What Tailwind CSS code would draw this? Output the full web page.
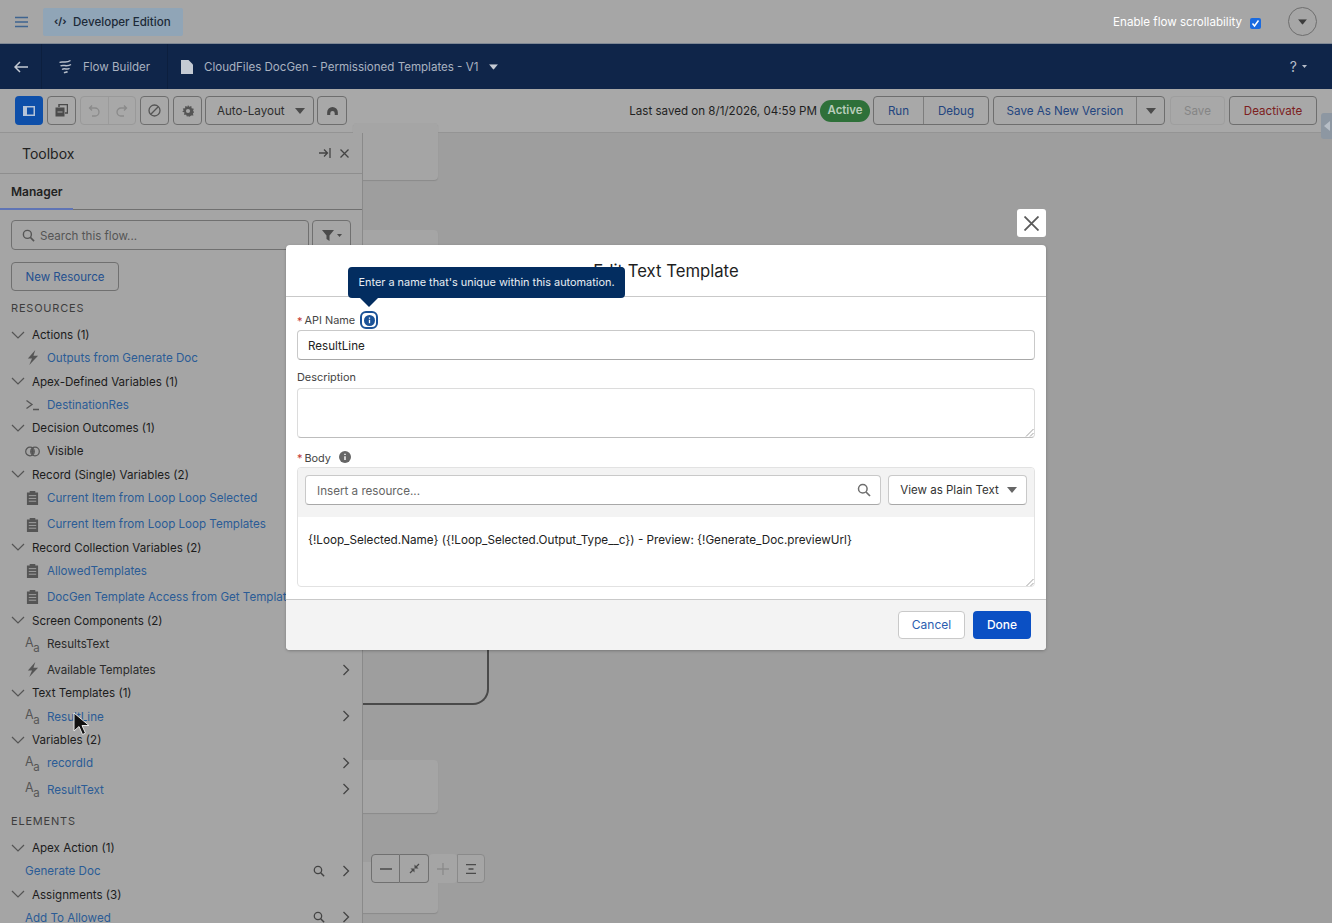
<!DOCTYPE html>
<html lang="en">
<head>
<meta charset="UTF-8">
<title>Flow Builder</title>
<script src="https://cdn.jsdelivr.net/npm/@tailwindcss/browser@4"></script>
</head>
<body class="font-[Inter,sans-serif] text-[#1c1c1c] bg-[#9e9e9e]">
<!-- shared icons -->
<svg class="hidden">
  <symbol id="chev-down" viewBox="0 0 14 14"><path d="M1 4l6 6 6-6" fill="none" stroke="currentColor" stroke-width="1.200"/></symbol>
  <symbol id="chev-right" viewBox="0 0 14 14"><path d="M4.500 2l5 5-5 5" fill="none" stroke="currentColor" stroke-width="1.300"/></symbol>
  <symbol id="search" viewBox="0 0 14 14"><circle cx="5.800" cy="5.800" r="4.300" fill="none" stroke="currentColor" stroke-width="1.500"/><path d="M9 9l4 4" stroke="currentColor" stroke-width="1.700"/></symbol>
  <symbol id="text-a" viewBox="0 0 15 16"><text x="0" y="10.500" font-size="12.500" font-family="Inter" fill="currentColor">A</text><text x="8.300" y="15.500" font-size="11.500" font-family="Inter" fill="currentColor">a</text></symbol>
  <symbol id="record" viewBox="0 0 14 16"><path d="M1 2.500h3V1h6v1.500h3V16H1z" fill="currentColor"/><path d="M3 6h8M3 9h8M3 12h8" stroke="#a5a5a5" stroke-width="1"/></symbol>
  <symbol id="bolt" viewBox="0 0 14 16"><path d="M10 0L2 9h4.500L3.500 16 13 6H8z" fill="currentColor"/></symbol>
  <symbol id="caret" viewBox="0 0 10 6"><path d="M0 0h10L5 6z" fill="currentColor"/></symbol>
</svg>

<div class="relative h-[923px] w-[1332px] overflow-hidden">
  <!-- global header -->
  <header class="flex h-[44px] items-center border-b border-[#7f8894] bg-[#a6a6a6] pl-[15px] pr-[15px]">
    <svg class="w-[13px] h-[12px] text-[#3f6490]" viewBox="0 0 13 12"><path d="M0 1.500h13M0 6h13M0 10.500h13" stroke="currentColor" stroke-width="1.700"/></svg>
    <div class="ml-[15px] flex h-[28px] w-[140px] items-center rounded-[2px] bg-[#90a5b7] pl-[11px] text-[11.600px] font-medium text-[#1d2a38]">
      <span class="w-[14px] text-[10px] font-bold">‹/›</span><span class="ml-[5px] pt-[2px]">Developer Edition</span>
    </div>
    <span class="ml-auto pt-[2px] text-[11.600px] text-white">Enable flow scrollability</span>
    <span class="ml-[8px] mt-[3px] flex h-[11px] w-[11px] items-center justify-center rounded-[2px] bg-[#1a6be0]">
      <svg class="w-[9px] h-[9px]" viewBox="0 0 9 9"><path d="M1.500 4.500l2 2.500 4-5.500" fill="none" stroke="#fff" stroke-width="1.500"/></svg>
    </span>
    <span class="ml-[27px] flex h-[29px] w-[29px] items-center justify-center rounded-full border border-[#6e6e6e]">
      <svg class="w-[9px] h-[6px] text-[#3c3c3c]" viewBox="0 0 10 6"><use href="#caret"/></svg>
    </span>
  </header>

  <!-- flow builder bar -->
  <nav class="flex h-[45px] items-center bg-[#0f2549] text-[11.550px] text-[#a9b2c0]">
    <div class="flex h-full w-[42px] items-center justify-center border-r border-[#0c1f3e]">
      <svg class="w-[14px] h-[12px]" viewBox="0 0 14 12"><path d="M6 1L1 6l5 5M1 6h13" fill="none" stroke="#c4cad3" stroke-width="1.500"/></svg>
    </div>
    <div class="flex h-full w-[126px] items-center border-r border-[#0c1f3e] pl-[16px]">
      <svg class="w-[15px] h-[15px]" viewBox="0 0 15 15"><path d="M1.500 3.500c3-2 6 1.500 11-2M2.500 7c3-2 6 1.500 10.500-1.500M4 10.500c3-2 5 1 7.500-1.200M6 14c1.500-1 2.500-.3 3.500-1.500" fill="none" stroke="#b8bfca" stroke-width="1.500"/></svg>
      <span class="ml-[10px] pt-[2px]">Flow Builder</span>
    </div>
    <div class="flex items-center pl-[13px]">
      <svg class="w-[12px] h-[14px]" viewBox="0 0 12 14"><path d="M0 0h7.500L12 4.500V14H0z" fill="#c4cad3"/></svg>
      <span class="ml-[11px] pt-[2px]">CloudFiles DocGen - Permissioned Templates - V1</span>
      <svg class="ml-[11px] w-[9px] h-[6px] text-[#c4cad3]" viewBox="0 0 10 6"><use href="#caret"/></svg>
    </div>
    <span class="ml-auto text-[14px] text-[#b5bcc8]">?</span>
    <svg class="ml-[5px] mr-[25px] w-[5px] h-[3px] text-[#b5bcc8]" viewBox="0 0 10 6"><use href="#caret"/></svg>
  </nav>

  <!-- toolbar -->
  <div class="flex h-[44px] items-center border-b border-[#949494] bg-[#a8a8a8] pl-[15px] pr-[15px] text-[11.600px]">
    <span class="flex h-[29px] w-[28px] items-center justify-center rounded-[4px] bg-[#0e4fa9]">
      <svg class="w-[12px] h-[10px]" viewBox="0 0 12 10"><path d="M0 0h12v10H0z" fill="#b6c4d8"/><path d="M4 1.500h6.500v7H4z" fill="#0e4fa9"/></svg>
    </span>
    <span class="ml-[4px] flex h-[29px] w-[29px] items-center justify-center rounded-[4px] border border-[#6e6e6e]">
      <svg class="w-[13px] h-[13px]" viewBox="0 0 13 13"><path d="M4 3V.5h8.500V9H10" fill="none" stroke="#4b4b4b" stroke-width="1.500"/><path d="M.5 3.500h9v9h-9z" fill="#4b4b4b"/><path d="M2.500 8h5" stroke="#a8a8a8"/></svg>
    </span>
    <span class="ml-[4px] flex h-[29px] w-[56px] rounded-[4px] border border-[#999]">
      <span class="flex flex-1 items-center justify-center border-r border-[#9b9b9b]">
        <svg class="w-[12px] h-[12px]" viewBox="0 0 12 12"><path d="M4 .5L1.500 3 4 5.500M1.500 3H7a3.800 3.800 0 010 8H4" fill="none" stroke="#8a8a8a" stroke-width="1.300"/></svg>
      </span>
      <span class="flex flex-1 items-center justify-center">
        <svg class="w-[12px] h-[12px]" viewBox="0 0 12 12"><path d="M8 .5L10.500 3 8 5.500M10.500 3H5a3.800 3.800 0 000 8h3" fill="none" stroke="#8a8a8a" stroke-width="1.300"/></svg>
      </span>
    </span>
    <span class="ml-[4px] flex h-[29px] w-[29px] items-center justify-center rounded-[4px] border border-[#6e6e6e]">
      <svg class="w-[13px] h-[13px]" viewBox="0 0 13 13"><circle cx="6.500" cy="6.500" r="5.500" fill="none" stroke="#555" stroke-width="1.300"/><path d="M2.800 10.200l7.400-7.400" stroke="#555" stroke-width="1.300"/></svg>
    </span>
    <span class="ml-[4px] flex h-[29px] w-[29px] items-center justify-center rounded-[4px] border border-[#6e6e6e]">
      <svg class="w-[12px] h-[12px]" viewBox="0 0 13 13"><path d="M6.500 0l1.300 2 2.300-.8.300 2.400 2.400.4-.9 2.500 1.600 1-1.700 1.600.6 2.300-2.400.1L7.500 13l-1-1.500-1 1.500-1-2.400-2.400-.1.600-2.300L.200 7l1.600-1L.900 3.900l2.400-.3.300-2.400 2.300.8z" fill="#555"/><circle cx="6.500" cy="6.500" r="2.300" fill="#a8a8a8"/></svg>
    </span>
    <span class="ml-[3px] flex h-[29px] w-[109px] items-center rounded-[4px] border border-[#6e6e6e] pl-[11px] pr-[8px] text-[#2e2e2e]">
      <span class="pt-[2px]">Auto-Layout</span>
      <svg class="ml-auto w-[10px] h-[6px] text-[#4b4b4b]" viewBox="0 0 10 6"><use href="#caret"/></svg>
    </span>
    <span class="ml-[3px] flex h-[29px] w-[30px] items-center justify-center rounded-[4px] border border-[#6e6e6e]">
      <svg class="w-[11px] h-[8px]" viewBox="0 0 12 9"><path d="M0 9V6a6 6 0 0112 0v3H8.500V7a2.500 2.500 0 00-5 0v2z" fill="#4b4b4b"/></svg>
    </span>

    <span class="ml-auto pt-[2px] text-[#1f1f1f]">Last saved on 8/1/2026, 04:59 PM</span>
    <span class="ml-[3px] flex h-[22px] w-[50px] items-center justify-center rounded-full bg-[#2e7039] text-[11.400px] font-semibold text-[#b9cdbb]">Active</span>
    <span class="ml-[3px] flex h-[29px] w-[116px] rounded-[4px] border border-[#6e6e6e] text-[#23457f]">
      <span class="flex w-[50px] items-center justify-center border-r border-[#7d7d7d] pt-[2px]">Run</span>
      <span class="flex flex-1 items-center justify-center pt-[2px]">Debug</span>
    </span>
    <span class="ml-[4px] flex h-[29px] w-[172px] rounded-[4px] border border-[#6e6e6e] text-[#23457f]">
      <span class="flex w-[143px] items-center justify-center border-r border-[#7d7d7d] pt-[2px]">Save As New Version</span>
      <span class="flex flex-1 items-center justify-center"><svg class="w-[10px] h-[6px] text-[#4b4b4b]" viewBox="0 0 10 6"><use href="#caret"/></svg></span>
    </span>
    <span class="ml-[5px] flex h-[29px] w-[55px] items-center justify-center rounded-[4px] border border-[#9e9e9e] pt-[2px] text-[#858585]">Save</span>
    <span class="ml-[4px] flex h-[29px] w-[88px] items-center justify-center rounded-[4px] border border-[#6e6e6e] pt-[2px] text-[#7c2020]">Deactivate</span>
  </div>

  <!-- body: toolbox on the left, canvas behind -->
  <div class="flex h-[790px]">
    <aside class="relative z-10 w-[363px] shrink-0 overflow-hidden border-r border-[#8a8a8a] bg-[#a5a5a5]">
      <div class="flex h-[41px] items-center border-b border-[#8e8e8e] pl-[22px] pr-[13px]">
        <span class="text-[14px] text-[#222]">Toolbox</span>
        <svg class="ml-auto w-[12px] h-[10px]" viewBox="0 0 12 10"><path d="M0 5h8M5 1.500L8.500 5 5 8.500M11 0v10" fill="none" stroke="#444" stroke-width="1.300"/></svg>
        <svg class="ml-[9px] w-[9px] h-[9px]" viewBox="0 0 9 9"><path d="M.5.500l8 8M8.500.500l-8 8" stroke="#444" stroke-width="1.300"/></svg>
      </div>
      <div class="relative h-[36px] border-b border-[#707070] pl-[11px] pt-[10px] text-[12px] font-semibold leading-[16px] text-[#222]">
        Manager
        <span class="absolute bottom-[-1px] left-0 h-[2px] w-[73px] bg-[#5f74b5]"></span>
      </div>

      <div class="mt-[10px] flex pl-[11px]">
        <div class="flex h-[30px] w-[298px] items-center rounded-[4px] border border-[#707070] pl-[10px] text-[11.600px] text-[#555]">
          <svg class="w-[13px] h-[13px] text-[#555]"><use href="#search"/></svg>
          <span class="ml-[5px] pt-[3px]">Search this flow...</span>
        </div>
        <div class="ml-[3px] flex h-[30px] w-[39px] items-center justify-center rounded-[4px] border border-[#707070]">
          <svg class="w-[12px] h-[11px]" viewBox="0 0 12 11"><path d="M0 0h12L7.500 5.500V11L4.500 9V5.500z" fill="#4b4b4b"/></svg>
          <svg class="ml-[3px] w-[5px] h-[3px] text-[#4b4b4b]" viewBox="0 0 10 6"><use href="#caret"/></svg>
        </div>
      </div>
      <div class="ml-[11px] mt-[12px] flex h-[29px] w-[108px] items-center justify-center rounded-[4px] border border-[#707070] pt-[2px] text-[11.500px] text-[#24508f]">New Resource</div>

      <div class="ml-[11px] mt-[10px] h-[15px] text-[11px] leading-[15px] tracking-[0.8px] text-[#3d3d3d]">RESOURCES</div>

      <!-- resource tree -->
      <div class="mt-[7px] text-[11.600px] leading-[23.300px] [&_span]:pt-[2px]">
        <div class="flex h-[23.300px] items-center pl-[11px]"><svg class="w-[14px] h-[14px] text-[#555]"><use href="#chev-down"/></svg><span class="ml-[7px]">Actions (1)</span></div>
        <div class="flex h-[23.300px] items-center pl-[26px] text-[#2b5c96]"><svg class="w-[13px] h-[15px] text-[#555]"><use href="#bolt"/></svg><span class="ml-[8px]">Outputs from Generate Doc</span></div>
        <div class="flex h-[23.300px] items-center pl-[11px]"><svg class="w-[14px] h-[14px] text-[#555]"><use href="#chev-down"/></svg><span class="ml-[7px]">Apex-Defined Variables (1)</span></div>
        <div class="flex h-[23.300px] items-center pl-[26px] text-[#2b5c96]"><svg class="w-[13px] h-[12px]" viewBox="0 0 13 12"><path d="M.5 1.500L6 5.500.5 9.500M7 10.500h6" fill="none" stroke="#555" stroke-width="1.300"/></svg><span class="ml-[8px]">DestinationRes</span></div>
        <div class="flex h-[23.300px] items-center pl-[11px]"><svg class="w-[14px] h-[14px] text-[#555]"><use href="#chev-down"/></svg><span class="ml-[7px]">Decision Outcomes (1)</span></div>
        <div class="flex h-[23.300px] items-center pl-[25px]"><svg class="w-[15px] h-[11px]" viewBox="0 0 15 11"><path d="M7.500 2.300a4.300 4.300 0 010 6.400 4.300 4.300 0 010-6.400z" fill="#555"/><circle cx="5" cy="5.500" r="4.300" fill="none" stroke="#555" stroke-width="1.200"/><circle cx="10" cy="5.500" r="4.300" fill="none" stroke="#555" stroke-width="1.200"/></svg><span class="ml-[7px]">Visible</span></div>
        <div class="flex h-[23.300px] items-center pl-[11px]"><svg class="w-[14px] h-[14px] text-[#555]"><use href="#chev-down"/></svg><span class="ml-[7px]">Record (Single) Variables (2)</span></div>
        <div class="flex h-[23.300px] items-center pl-[26px] text-[#2b5c96]"><svg class="w-[13px] h-[15px] text-[#555]"><use href="#record"/></svg><span class="ml-[8px]">Current Item from Loop Loop Selected</span></div>
        <div class="mt-[3px] flex h-[23.300px] items-center pl-[26px] text-[#2b5c96]"><svg class="w-[13px] h-[15px] text-[#555]"><use href="#record"/></svg><span class="ml-[8px]">Current Item from Loop Loop Templates</span></div>
        <div class="flex h-[23.300px] items-center pl-[11px]"><svg class="w-[14px] h-[14px] text-[#555]"><use href="#chev-down"/></svg><span class="ml-[7px]">Record Collection Variables (2)</span></div>
        <div class="flex h-[23.300px] items-center pl-[26px] text-[#2b5c96]"><svg class="w-[13px] h-[15px] text-[#555]"><use href="#record"/></svg><span class="ml-[8px]">AllowedTemplates</span></div>
        <div class="mt-[3px] flex h-[23.300px] items-center pl-[26px] text-[#2b5c96]"><svg class="w-[13px] h-[15px] text-[#555]"><use href="#record"/></svg><span class="ml-[8px] whitespace-nowrap">DocGen Template Access from Get Templates</span></div>
        <div class="flex h-[23.300px] items-center pl-[11px]"><svg class="w-[14px] h-[14px] text-[#555]"><use href="#chev-down"/></svg><span class="ml-[7px]">Screen Components (2)</span></div>
        <div class="flex h-[23.300px] items-center pl-[25px] text-[#2a2a2a]"><svg class="w-[15px] h-[16px] text-[#555]"><use href="#text-a"/></svg><span class="ml-[7px]">ResultsText</span></div>
        <div class="mt-[3px] flex h-[23.300px] items-center pl-[26px] pr-[9px] text-[#2a2a2a]"><svg class="w-[13px] h-[15px] text-[#555]"><use href="#bolt"/></svg><span class="ml-[8px]">Available Templates</span><svg class="ml-auto w-[14px] h-[14px] text-[#444]"><use href="#chev-right"/></svg></div>
        <div class="flex h-[23.300px] items-center pl-[11px]"><svg class="w-[14px] h-[14px] text-[#555]"><use href="#chev-down"/></svg><span class="ml-[7px]">Text Templates (1)</span></div>
        <div class="flex h-[23.300px] items-center pl-[25px] pr-[9px] text-[#2b5c96]"><svg class="w-[15px] h-[16px] text-[#555]"><use href="#text-a"/></svg><span class="ml-[7px]">ResultLine</span><svg class="ml-auto w-[14px] h-[14px] text-[#444]"><use href="#chev-right"/></svg></div>
        <div class="flex h-[23.300px] items-center pl-[11px]"><svg class="w-[14px] h-[14px] text-[#555]"><use href="#chev-down"/></svg><span class="ml-[7px]">Variables (2)</span></div>
        <div class="flex h-[23.300px] items-center pl-[25px] pr-[9px] text-[#2b5c96]"><svg class="w-[15px] h-[16px] text-[#555]"><use href="#text-a"/></svg><span class="ml-[7px]">recordId</span><svg class="ml-auto w-[14px] h-[14px] text-[#444]"><use href="#chev-right"/></svg></div>
        <div class="mt-[3px] flex h-[23.300px] items-center pl-[25px] pr-[9px] text-[#2b5c96]"><svg class="w-[15px] h-[16px] text-[#555]"><use href="#text-a"/></svg><span class="ml-[7px]">ResultText</span><svg class="ml-auto w-[14px] h-[14px] text-[#444]"><use href="#chev-right"/></svg></div>
      </div>

      <div class="ml-[11px] mt-[13px] h-[15px] text-[11px] leading-[15px] tracking-[0.8px] text-[#3d3d3d]">ELEMENTS</div>

      <div class="mt-[7px] text-[11.600px] leading-[23.300px] [&_span]:pt-[2px]">
        <div class="flex h-[23.300px] items-center pl-[11px]"><svg class="w-[14px] h-[14px] text-[#555]"><use href="#chev-down"/></svg><span class="ml-[7px]">Apex Action (1)</span></div>
        <div class="flex h-[23.300px] items-center pl-[25px] pr-[9px] text-[#2b5c96]"><span>Generate Doc</span><svg class="ml-auto w-[12px] h-[12px] text-[#444]"><use href="#search"/></svg><svg class="ml-[14px] w-[14px] h-[14px] text-[#444]"><use href="#chev-right"/></svg></div>
        <div class="flex h-[23.300px] items-center pl-[11px]"><svg class="w-[14px] h-[14px] text-[#555]"><use href="#chev-down"/></svg><span class="ml-[7px]">Assignments (3)</span></div>
        <div class="flex h-[23.300px] items-center pl-[25px] pr-[9px] text-[#2b5c96]"><span>Add To Allowed</span><svg class="ml-auto w-[12px] h-[12px] text-[#444]"><use href="#search"/></svg><svg class="ml-[14px] w-[14px] h-[14px] text-[#444]"><use href="#chev-right"/></svg></div>
      </div>
    </aside>

    <main class="relative flex-1 bg-[#9e9e9e]">
      <!-- flow nodes showing past the toolbox -->
      <div class="absolute left-[-10px] top-[-10px] h-[57px] w-[85px] rounded-[4px] bg-[#a5a5a5] shadow-[0_1px_1px_#8a8a8a]"></div>
      <div class="absolute left-[-10px] top-[97px] h-[60px] w-[85px] rounded-[4px] bg-[#a5a5a5] shadow-[0_1px_1px_#8a8a8a]"></div>
      <div class="absolute left-[-10px] top-[440px] h-[132px] w-[136px] rounded-br-[16px] border-b-2 border-r-2 border-[#4a4a4a]"></div>
      <div class="absolute left-[-10px] top-[627px] h-[53px] w-[85px] rounded-[4px] bg-[#a5a5a5] shadow-[0_1px_1px_#8a8a8a]"></div>
      <div class="absolute left-[-10px] top-[729px] h-[51px] w-[85px] rounded-[4px] bg-[#a5a5a5] shadow-[0_1px_1px_#8a8a8a]"></div>
      <!-- zoom controls -->
      <div class="absolute left-[8px] top-[721px] flex h-[29px] w-[114px]">
        <span class="flex w-[29px] items-center justify-center rounded-l-[4px] border border-[#707070] bg-[#a5a5a5]"><svg class="w-[12px] h-[2px]" viewBox="0 0 12 2"><path d="M0 1h12" stroke="#4b4b4b" stroke-width="1.500"/></svg></span>
        <span class="flex w-[29px] items-center justify-center rounded-r-[4px] border border-l-0 border-[#707070] bg-[#a5a5a5]"><svg class="w-[11px] h-[11px]" viewBox="0 0 11 11"><path d="M1 10l3.500-3.500M10 1L6.500 4.500" stroke="#4b4b4b" stroke-width="1.300"/><path d="M1.500 5.500h4v4zM9.500 5.500h-4v-4z" fill="#4b4b4b"/></svg></span>
        <span class="flex w-[28px] items-center justify-center rounded-[4px] bg-[#a5a5a5]"><svg class="w-[12px] h-[12px]" viewBox="0 0 12 12"><path d="M0 6h12M6 0v12" stroke="#8a8a8a" stroke-width="1.300"/></svg></span>
        <span class="flex w-[28px] items-center justify-center rounded-r-[4px] border border-[#8a8a8a] bg-[#a5a5a5]"><svg class="w-[12px] h-[10px]" viewBox="0 0 12 10"><path d="M1 .700h10M3.500 5h5M1 9.300h10" stroke="#4b4b4b" stroke-width="1.300"/></svg></span>
      </div>
      <!-- collapsed right rail -->
      <div class="absolute right-0 top-[-20px] flex h-[26px] w-[11px] items-center justify-center rounded-l-[3px] bg-[#8d97a2]">
        <svg class="w-[6px] h-[10px]" viewBox="0 0 6 10"><path d="M6 0v10L0 5z" fill="#b7bec6"/></svg>
      </div>
    </main>
  </div>

  <!-- modal -->
  <button class="absolute z-20 left-[1017px] top-[209px] flex h-[28px] w-[29px] items-center justify-center rounded-[3px] bg-white">
    <svg class="w-[15px] h-[15px]" viewBox="0 0 15 15"><path d="M.5.500l14 14M14.500.500l-14 14" stroke="#5a5a5a" stroke-width="1.800"/></svg>
  </button>
  <section class="absolute z-20 left-[286px] top-[245px] h-[405px] w-[760px] overflow-hidden rounded-[4px] bg-white shadow-[0_1px_3px_rgba(0,0,0,0.25)]">
    <div class="flex h-[52px] items-center justify-center border-b border-[#c9c9c9] pt-[2px] text-[16.700px] text-[#1e1e1e]">Edit Text Template</div>
    <div class="h-[302px] px-[11px] text-[10.900px] text-[#444]">
      <div class="flex h-[33px] items-end pb-[1px]">
        <span class="text-[#c23934]">*</span><span class="ml-[2px] mb-[1px]">API Name</span>
        <span class="ml-[5px] flex h-[18px] w-[18px] items-center justify-center rounded-[6px] border-2 border-[#1b5297]">
          <svg class="w-[11px] h-[11px]" viewBox="0 0 11 11"><circle cx="5.500" cy="5.500" r="5.500" fill="#1b5297"/><path d="M5.500 4.800v3.400M5.500 2.600v1.100" stroke="#fff" stroke-width="1.300"/></svg>
        </span>
      </div>
      <div class="flex h-[30px] items-center rounded-[4px] border border-[#c9c9c9] border-b-[#a8a8a8] pl-[10px] pt-[3px] text-[11.600px] text-[#222]">ResultLine</div>
      <div class="mt-[10px] h-[18px] leading-[15px]">Description</div>
      <div class="relative h-[50px] rounded-[4px] border border-[#dcdcdc] border-b-[#bdbdbd]">
        <svg class="absolute bottom-0 right-0 w-[9px] h-[9px]" viewBox="0 0 9 9"><path d="M8.500 1L1 8.500M8.500 5L5 8.500" stroke="#888" stroke-width="0.800"/></svg>
      </div>
      <div class="mt-[11px] flex h-[18px] items-center">
        <span class="text-[#c23934]">*</span><span class="ml-[2px]">Body</span>
        <svg class="ml-[8px] mb-[3px] w-[12px] h-[12px]" viewBox="0 0 11 11"><circle cx="5.500" cy="5.500" r="5.500" fill="#666"/><path d="M5.500 4.800v3.400M5.500 2.600v1.100" stroke="#fff" stroke-width="1.300"/></svg>
      </div>
      <div class="h-[120px] overflow-hidden rounded-[4px] border border-[#e2e2e2]">
        <div class="flex h-[49px] items-start bg-[#f3f3f3] px-[7px] pt-[7px]">
          <div class="flex h-[30px] w-[577px] items-center rounded-[4px] border border-[#c9c9c9] border-b-[#a8a8a8] bg-white pl-[11px] pr-[9px] text-[11.650px] text-[#666]">
            <span class="pt-[3px]">Insert a resource...</span>
            <svg class="ml-auto w-[14px] h-[14px] text-[#6e6e6e]"><use href="#search"/></svg>
          </div>
          <div class="ml-[7px] flex h-[30px] w-[139px] items-center rounded-[4px] border border-[#c9c9c9] border-b-[#a8a8a8] bg-white pl-[11px] pr-[9px] text-[11.550px] text-[#333]">
            <span class="pt-[2px]">View as Plain Text</span>
            <svg class="ml-auto w-[10px] h-[6px] text-[#666]" viewBox="0 0 10 6"><use href="#caret"/></svg>
          </div>
        </div>
        <div class="relative h-[70px] pl-[10px] pt-[15px] text-[11.700px] leading-[16px] text-[#222]">
          {!Loop_Selected.Name} ({!Loop_Selected.Output_Type__c}) - Preview: {!Generate_Doc.previewUrl}
          <svg class="absolute bottom-0 right-0 w-[9px] h-[9px]" viewBox="0 0 9 9"><path d="M8.500 1L1 8.500M8.500 5L5 8.500" stroke="#888" stroke-width="0.800"/></svg>
        </div>
      </div>
    </div>
    <div class="flex h-[51px] items-center justify-end border-t border-[#c9c9c9] bg-[#f3f3f3] pr-[15px] text-[12px]">
      <span class="flex h-[28px] w-[67px] items-center justify-center rounded-[4px] border border-[#c9c9c9] bg-white text-[#2a5db0]">Cancel</span>
      <span class="ml-[8px] flex h-[28px] w-[58px] items-center justify-center rounded-[4px] bg-[#0b50c4] font-medium text-white">Done</span>
    </div>
  </section>

  <!-- help tooltip -->
  <div class="absolute z-30 left-[348px] top-[267px] flex h-[31px] w-[277px] items-center justify-center rounded-[4px] bg-[#032d60] text-[10.900px] text-[#e8edf3]">Enter a name that's unique within this automation.</div>
  <svg class="absolute z-30 left-[360px] top-[298px] w-[18px] h-[9px]" viewBox="0 0 18 9"><path d="M0 0h18L9 9z" fill="#032d60"/></svg>

  <!-- mouse pointer -->
  <svg class="absolute z-30 left-[73px] top-[712px] w-[17px] h-[24px]" viewBox="0 0 17 24"><path d="M1 1v18l5-4.500 3.500 8 3-1.300-3.500-7.700H16z" fill="#111" stroke="#e8e8e8" stroke-width="1"/></svg>
</div>
</body>
</html>
